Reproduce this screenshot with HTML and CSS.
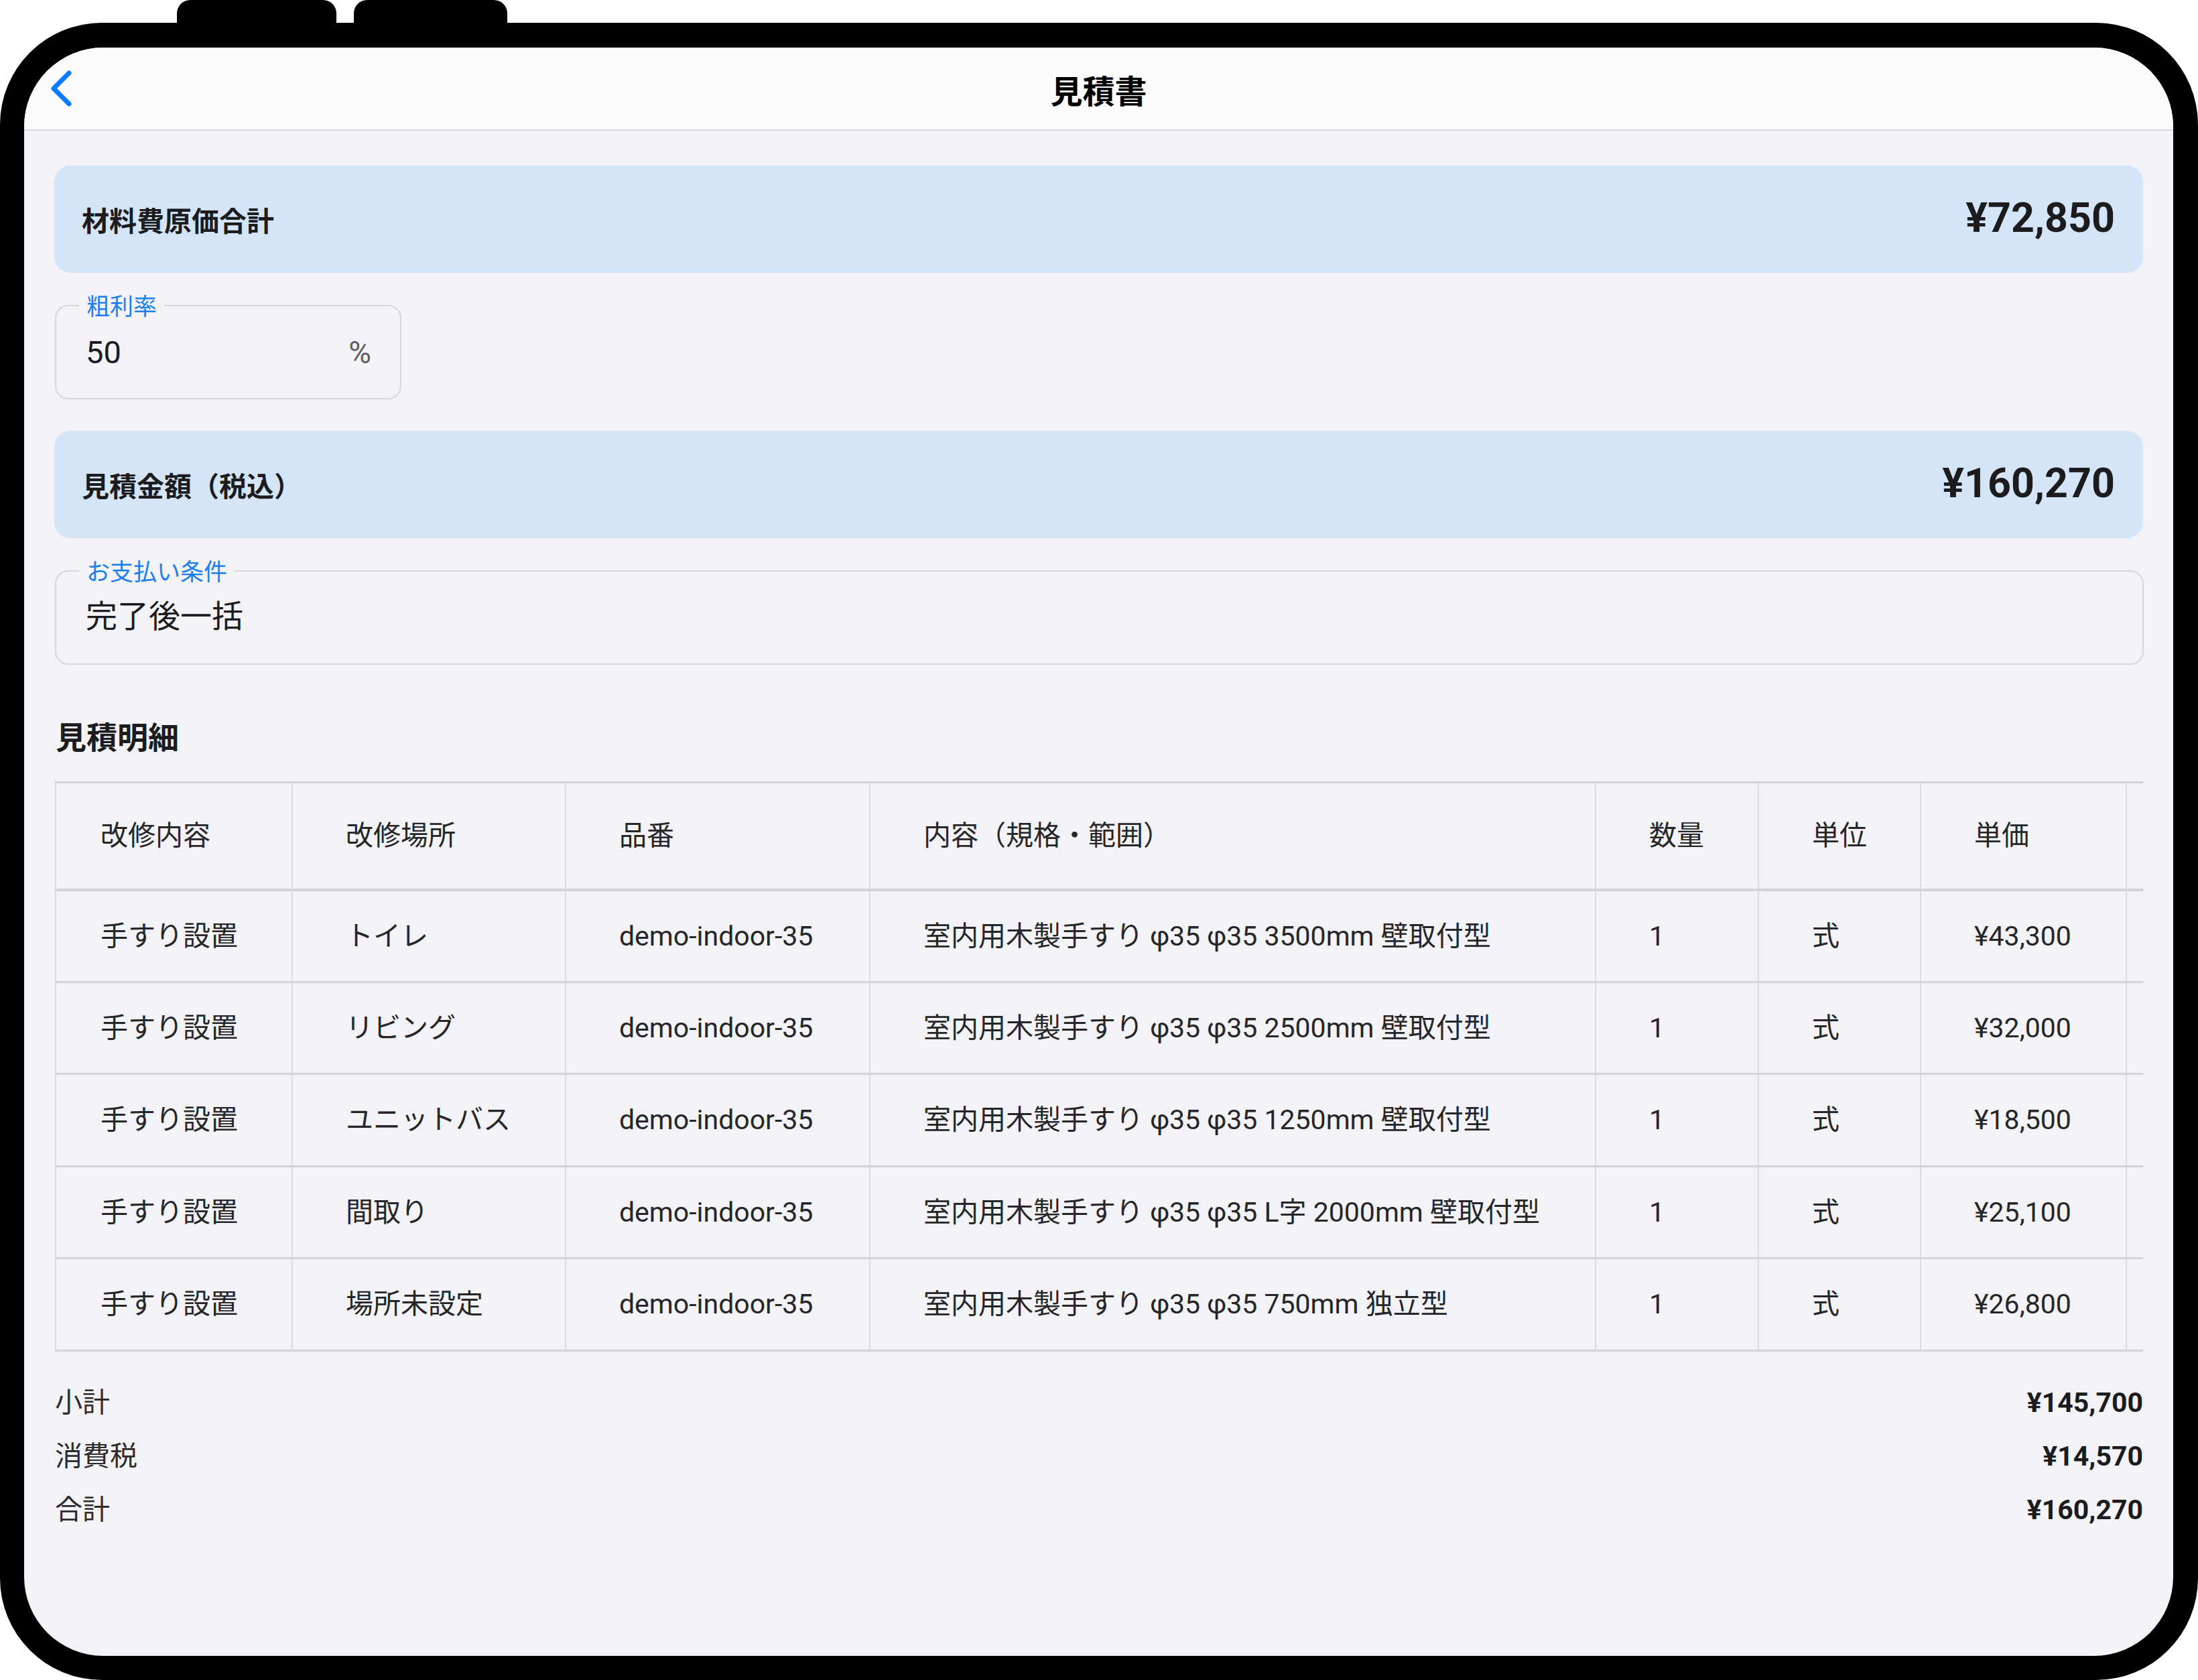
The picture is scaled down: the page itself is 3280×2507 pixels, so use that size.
FILE: index.html
```html
<!DOCTYPE html>
<html lang="ja">
<head>
<meta charset="utf-8">
<title>見積書</title>
<link rel="stylesheet" href="styles.css">
</head>
<body>
<div class="frame">
  <div class="device">
    <div class="hw-btn hw-btn-a"></div>
    <div class="hw-btn hw-btn-b"></div>
    <div class="screen">
      <header class="nav">
        <button class="back" type="button" aria-label="戻る">
          <svg class="back-icon" width="31" height="54" viewBox="0 0 31 54"><path d="M27 4 L4 27 L27 50" fill="none" stroke="#0a7aff" stroke-width="7" stroke-linecap="round" stroke-linejoin="round"/></svg>
        </button>
        <h1 class="nav-title">見積書</h1>
        <div class="nav-spacer"></div>
      </header>
      <main class="content">
        <section class="summary-card">
          <span class="card-label">材料費原価合計</span>
          <span class="card-value">¥72,850</span>
        </section>
        <div class="field field-rate">
          <span class="field-label">粗利率</span>
          <span class="field-value">50</span>
          <span class="field-suffix">%</span>
        </div>
        <section class="summary-card card-second">
          <span class="card-label">見積金額（税込）</span>
          <span class="card-value">¥160,270</span>
        </section>
        <div class="field field-wide">
          <span class="field-label">お支払い条件</span>
          <span class="field-value">完了後一括</span>
        </div>
        <h2 class="section-title">見積明細</h2>
        <div class="table-wrap">
          <table class="estimate">
            <colgroup>
              <col class="c1"><col class="c2"><col class="c3"><col class="c4"><col class="c5"><col class="c6"><col class="c7"><col class="c8">
            </colgroup>
            <thead>
              <tr><th>改修内容</th><th>改修場所</th><th>品番</th><th>内容（規格・範囲）</th><th>数量</th><th>単位</th><th>単価</th><th></th></tr>
            </thead>
            <tbody>
              <tr><td>手すり設置</td><td>トイレ</td><td>demo-indoor-35</td><td>室内用木製手すり φ35 φ35 3500mm 壁取付型</td><td>1</td><td>式</td><td>¥43,300</td><td></td></tr>
              <tr><td>手すり設置</td><td>リビング</td><td>demo-indoor-35</td><td>室内用木製手すり φ35 φ35 2500mm 壁取付型</td><td>1</td><td>式</td><td>¥32,000</td><td></td></tr>
              <tr><td>手すり設置</td><td>ユニットバス</td><td>demo-indoor-35</td><td>室内用木製手すり φ35 φ35 1250mm 壁取付型</td><td>1</td><td>式</td><td>¥18,500</td><td></td></tr>
              <tr><td>手すり設置</td><td>間取り</td><td>demo-indoor-35</td><td>室内用木製手すり φ35 φ35 L字 2000mm 壁取付型</td><td>1</td><td>式</td><td>¥25,100</td><td></td></tr>
              <tr><td>手すり設置</td><td>場所未設定</td><td>demo-indoor-35</td><td>室内用木製手すり φ35 φ35 750mm 独立型</td><td>1</td><td>式</td><td>¥26,800</td><td></td></tr>
            </tbody>
          </table>
        </div>
        <dl class="totals">
          <div class="total-row"><dt>小計</dt><dd>¥145,700</dd></div>
          <div class="total-row"><dt>消費税</dt><dd>¥14,570</dd></div>
          <div class="total-row"><dt>合計</dt><dd>¥160,270</dd></div>
        </dl>
      </main>
    </div>
  </div>
</div>
</body>
</html>
```

FILE: styles.css
```css
* { box-sizing: border-box; }

html, body {
  margin: 0;
  padding: 0;
}

body {
  width: 3280px;
  height: 2507px;
  background: #ffffff;
  font-family: Roboto, "Noto Sans CJK JP", sans-serif;
  color: #1c1c1e;
  overflow: hidden;
}

.frame {
  padding-top: 34px;
}

.device {
  position: relative;
  width: 3280px;
  height: 2473px;
  background: #000;
  border-radius: 152px;
  padding: 37px 37px 36px 36px;
}

.hw-btn {
  position: absolute;
  top: -34px;
  height: 44px;
  background: #000;
  border-radius: 20px 20px 0 0;
}

.hw-btn-a { left: 264px; width: 238px; }
.hw-btn-b { left: 528px; width: 229px; }

.screen {
  width: 100%;
  height: 100%;
  background: #f2f2f7;
  border-radius: 118px;
  overflow: hidden;
  display: flex;
  flex-direction: column;
}

/* Navigation bar */
.nav {
  flex: 0 0 auto;
  height: 124px;
  background: #fbfbfc;
  border-bottom: 2px solid #d8d8da;
  display: grid;
  grid-template-columns: 1fr auto 1fr;
  align-items: center;
  padding: 0 40px;
}

.back {
  justify-self: start;
  background: none;
  border: 0;
  padding: 0;
  margin: 0;
  width: 31px;
  height: 54px;
  display: block;
}

.back-icon { display: block; }

.nav-title {
  margin: 12px 0 0 0;
  font-size: 48px;
  font-weight: 700;
  color: #000;
  line-height: 56px;
}

/* Content */
.content {
  flex: 1 1 auto;
  padding: 52px 45px 0 45px;
  display: flex;
  flex-direction: column;
}

.summary-card {
  height: 160px;
  background: #d4e5f7;
  border-radius: 24px;
  padding: 0 42px 0 41px;
  display: flex;
  align-items: center;
  justify-content: space-between;
}

.card-second { margin-top: 47px; }

.card-label {
  font-size: 41px;
  font-weight: 700;
  color: #1c1c1e;
}

.card-value {
  font-size: 61px;
  font-weight: 700;
  color: #1c1c1e;
  padding-bottom: 4px;
}

/* Outlined text fields */
.field {
  position: relative;
  margin-top: 48px;
  height: 141px;
  border: 2px solid #d7d7db;
  border-radius: 20px;
  display: flex;
  align-items: center;
  padding: 0 43px 0 44px;
}

.field-rate { width: 517px; margin-left: 1px; }
.field-wide { margin-left: 1px; margin-right: -1px; padding-bottom: 12px; }

.field-label {
  position: absolute;
  top: -18px;
  left: 34px;
  padding: 0 11px;
  background: #f2f2f7;
  font-size: 35px;
  line-height: 40px;
  color: #1a80f0;
}

.field-value {
  flex: 1 1 auto;
  font-size: 47px;
  color: #1c1c1e;
}

.field-suffix {
  font-size: 46px;
  color: #5f5f64;
}

.section-title {
  margin: 81px 0 0 2px;
  font-size: 46px;
  line-height: 56px;
  font-weight: 700;
  color: #1c1c1e;
}

/* Table */
.table-wrap {
  margin-top: 37px;
  margin-left: 1px;
  overflow: hidden;
}

.estimate {
  table-layout: fixed;
  width: 3390px;
  border-collapse: collapse;
  font-size: 41px;
  color: #262628;
}

.c1 { width: 353px; }
.c2 { width: 408px; }
.c3 { width: 454px; }
.c4 { width: 1083px; }
.c5 { width: 243px; }
.c6 { width: 242px; }
.c7 { width: 307px; }
.c8 { width: 300px; }

.estimate th,
.estimate td {
  font-weight: 400;
  text-align: left;
  white-space: nowrap;
  padding: 0 40px 0 79px;
  border-left: 2px solid #dcdce0;
  border-right: 2px solid #dcdce0;
  border-top: 3px solid #d3d3d8;
  border-bottom: 3px solid #d3d3d8;
  line-height: 56px;
}

.estimate th:first-child,
.estimate td:first-child {
  padding-left: 66px;
}

.estimate thead tr { height: 160px; }
.estimate thead th { border-bottom-width: 4px; }
.estimate tbody tr { height: 137.5px; }

/* Totals */
.totals {
  margin: 48px 0 0 0;
  padding: 0;
  display: flex;
  flex-direction: column;
  gap: 24px;
}

.total-row {
  display: flex;
  justify-content: space-between;
  align-items: center;
  font-size: 41px;
  line-height: 56px;
}

.total-row dt {
  color: #2c2c2e;
  margin-left: 1px;
}

.total-row dd {
  margin: 0;
  font-weight: 700;
  color: #1c1c1e;
}
```
